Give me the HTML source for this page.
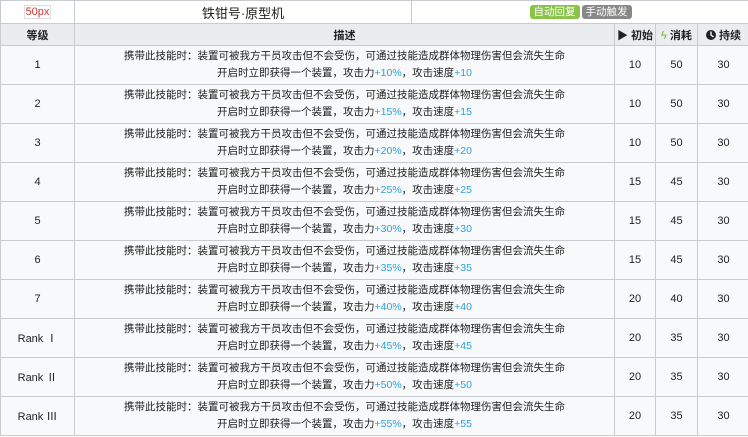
<!DOCTYPE html>
<html><head><meta charset="utf-8"><style>
body{margin:0;background:#fff;width:748px;height:437px;overflow:hidden;font-family:"Liberation Sans","Noto Sans CJK SC",sans-serif;color:#222}
table{border-collapse:collapse;table-layout:fixed;position:absolute;left:0;top:0;width:749px}
td{border:1px solid #c8ccd1;text-align:center;padding:0;font-size:11px;background:#f8f9fa}
.top td{height:22px;background:#fff}
.hd td{height:21px;background:#eaecf0;font-weight:bold;font-size:11px}
.r td{height:38px}
.d{font-size:10.5px;line-height:17px}
.b{color:#29a2dc}
.tag{display:inline-block;color:#fff;font-size:10.5px;line-height:14px;padding:0 4px;border-radius:3px;margin:0 1px}
</style></head><body>
<table>
<colgroup><col style="width:74px"><col style="width:337px"><col style="width:203px"><col style="width:41px"><col style="width:42px"><col style="width:52px"></colgroup>
<tr class="top"><td><span style="color:#c33;font-size:11px;border:1px solid #ddd;padding:0 1px">50px</span></td><td style="font-size:13px">铁钳号·原型机</td><td colspan="4"><span class="tag" style="background:#8bc34a">自动回复</span><span class="tag" style="background:#888">手动触发</span></td></tr>
<tr class="hd"><td>等级</td><td colspan="2">描述</td><td>▶ 初始</td><td><span style="color:#8bc34a">ϟ</span> 消耗</td><td><svg width="10" height="10" viewBox="0 0 10 10" style="vertical-align:-1px"><circle cx="5" cy="5" r="5" fill="#222"/><path d="M5 1.5V5L7.5 7" stroke="#fff" stroke-width="1.4" fill="none"/></svg> 持续</td></tr>
<tr class="r"><td>1</td><td colspan="2" class="d">携带此技能时：装置可被我方干员攻击但不会受伤，可通过技能造成群体物理伤害但会流失生命<br>开启时立即获得一个装置，攻击力<span class="b">+10%</span>，攻击速度<span class="b">+10</span></td><td>10</td><td>50</td><td>30</td></tr>
<tr class="r"><td>2</td><td colspan="2" class="d">携带此技能时：装置可被我方干员攻击但不会受伤，可通过技能造成群体物理伤害但会流失生命<br>开启时立即获得一个装置，攻击力<span class="b">+15%</span>，攻击速度<span class="b">+15</span></td><td>10</td><td>50</td><td>30</td></tr>
<tr class="r"><td>3</td><td colspan="2" class="d">携带此技能时：装置可被我方干员攻击但不会受伤，可通过技能造成群体物理伤害但会流失生命<br>开启时立即获得一个装置，攻击力<span class="b">+20%</span>，攻击速度<span class="b">+20</span></td><td>10</td><td>50</td><td>30</td></tr>
<tr class="r"><td>4</td><td colspan="2" class="d">携带此技能时：装置可被我方干员攻击但不会受伤，可通过技能造成群体物理伤害但会流失生命<br>开启时立即获得一个装置，攻击力<span class="b">+25%</span>，攻击速度<span class="b">+25</span></td><td>15</td><td>45</td><td>30</td></tr>
<tr class="r"><td>5</td><td colspan="2" class="d">携带此技能时：装置可被我方干员攻击但不会受伤，可通过技能造成群体物理伤害但会流失生命<br>开启时立即获得一个装置，攻击力<span class="b">+30%</span>，攻击速度<span class="b">+30</span></td><td>15</td><td>45</td><td>30</td></tr>
<tr class="r"><td>6</td><td colspan="2" class="d">携带此技能时：装置可被我方干员攻击但不会受伤，可通过技能造成群体物理伤害但会流失生命<br>开启时立即获得一个装置，攻击力<span class="b">+35%</span>，攻击速度<span class="b">+35</span></td><td>15</td><td>45</td><td>30</td></tr>
<tr class="r"><td>7</td><td colspan="2" class="d">携带此技能时：装置可被我方干员攻击但不会受伤，可通过技能造成群体物理伤害但会流失生命<br>开启时立即获得一个装置，攻击力<span class="b">+40%</span>，攻击速度<span class="b">+40</span></td><td>20</td><td>40</td><td>30</td></tr>
<tr class="r"><td>Rank Ⅰ</td><td colspan="2" class="d">携带此技能时：装置可被我方干员攻击但不会受伤，可通过技能造成群体物理伤害但会流失生命<br>开启时立即获得一个装置，攻击力<span class="b">+45%</span>，攻击速度<span class="b">+45</span></td><td>20</td><td>35</td><td>30</td></tr>
<tr class="r"><td>Rank Ⅱ</td><td colspan="2" class="d">携带此技能时：装置可被我方干员攻击但不会受伤，可通过技能造成群体物理伤害但会流失生命<br>开启时立即获得一个装置，攻击力<span class="b">+50%</span>，攻击速度<span class="b">+50</span></td><td>20</td><td>35</td><td>30</td></tr>
<tr class="r"><td>Rank Ⅲ</td><td colspan="2" class="d">携带此技能时：装置可被我方干员攻击但不会受伤，可通过技能造成群体物理伤害但会流失生命<br>开启时立即获得一个装置，攻击力<span class="b">+55%</span>，攻击速度<span class="b">+55</span></td><td>20</td><td>35</td><td>30</td></tr>
</table>
</body></html>
